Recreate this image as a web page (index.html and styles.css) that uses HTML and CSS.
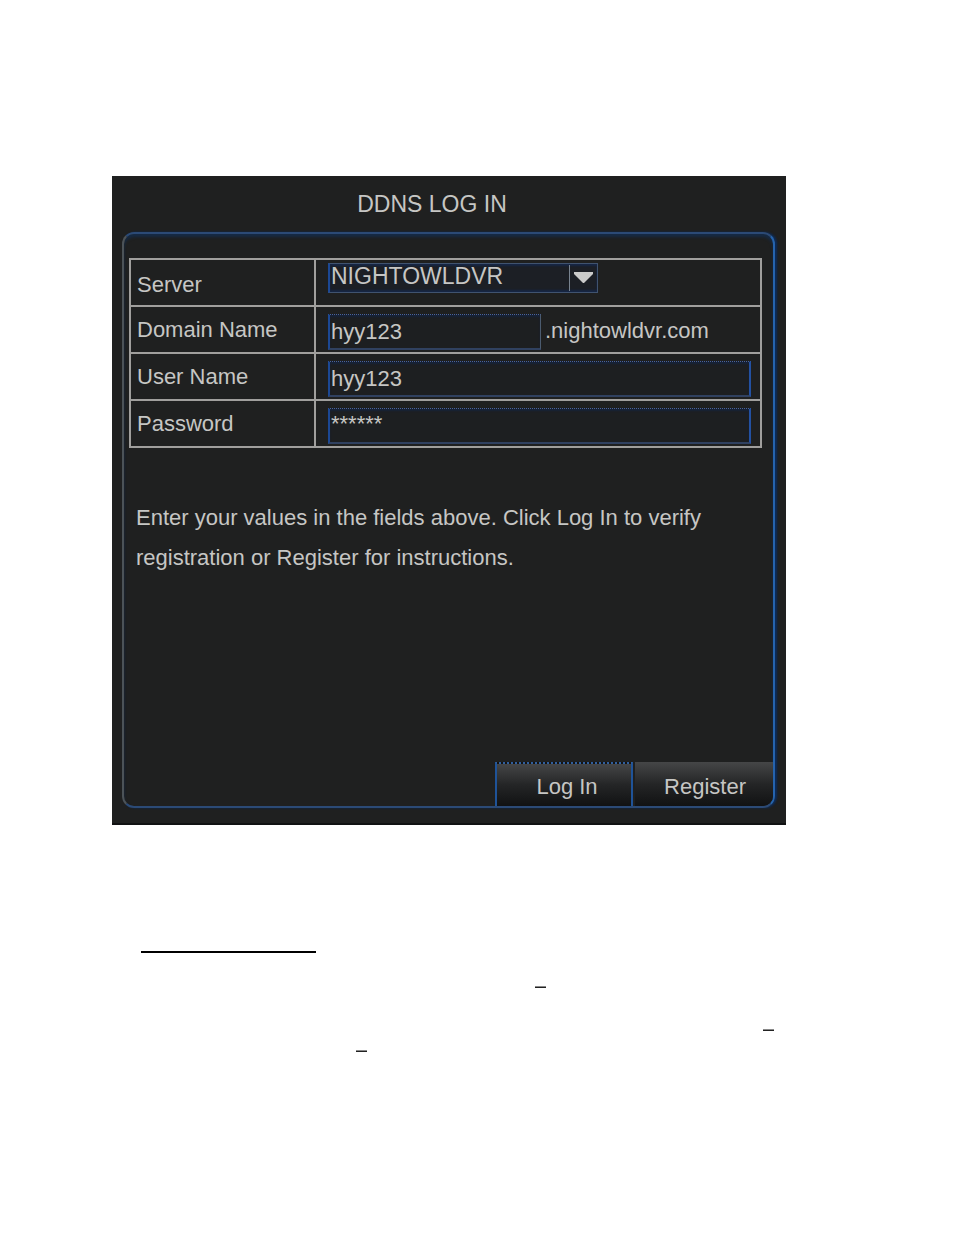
FILE: index.html
```html
<!DOCTYPE html>
<html lang="en">
<head>
<meta charset="utf-8">
<meta name="viewport" content="width=device-width, initial-scale=1">
<title>DDNS Log In</title>
<link rel="stylesheet" href="styles.css">
</head>
<body>
<main class="page">
  <form class="dialog">
    <h1 class="title">DDNS LOG IN</h1>
    <div class="frame">
      <table class="fields">
        <tr>
          <th scope="row" class="server-label"><label for="server">Server</label></th>
          <td class="server-cell">
            <div class="picker">
              <select id="server"><option>NIGHTOWLDVR</option></select>
              <svg class="arrow" viewBox="0 0 28 26" aria-hidden="true"><path class="arrow-line" d="M.5 0V26"/><path class="arrow-head" d="M5 7H24V9L15 18H14L5 9Z"/></svg>
            </div>
          </td>
        </tr>
        <tr>
          <th scope="row"><label for="domain">Domain Name</label></th>
          <td>
            <div class="domain">
              <input class="box box-short" id="domain" type="text" value="hyy123">
              <span class="suffix">.nightowldvr.com</span>
            </div>
          </td>
        </tr>
        <tr>
          <th scope="row"><label for="user">User Name</label></th>
          <td><input class="box" id="user" type="text" value="hyy123"></td>
        </tr>
        <tr>
          <th scope="row"><label for="password">Password</label></th>
          <td><input class="box box-stars" id="password" type="text" value="******"></td>
        </tr>
      </table>
      <p class="hint">Enter your values in the fields above. Click Log In to verify registration or Register for instructions.</p>
      <div class="actions">
        <button class="btn btn-active" type="button">Log In</button>
        <button class="btn" type="button">Register</button>
      </div>
    </div>
  </form>
  <section class="notes">
    <hr class="rule">
    <div class="note note-first"><span class="dash"></span></div>
    <div class="note note-second"><span class="dash"></span></div>
    <div class="note note-third"><span class="dash"></span></div>
  </section>
</main>
</body>
</html>
```
FILE: styles.css
```css
* { box-sizing: border-box; }

body {
  margin: 0;
  background: #fff;
  font-family: "Liberation Sans", Arial, sans-serif;
  font-size: 22px;
}

.page { padding: 176px 168px 0 112px; }

.dialog {
  padding: 0 11px 15px 10px;
  background: #1f2020;
  border-bottom: 2px solid #111213;
  color: #c6c6c4;
}

.title {
  margin: 0;
  padding-right: 33px;
  font-size: 23px;
  font-weight: 400;
  line-height: 56px;
  text-align: center;
}

.frame {
  padding: 24px 0 0 5px;
  border: 2px solid #2b4a76;
  border-left-color: #4c5358;
  border-right-color: #2563ad;
  border-radius: 12px;
  box-shadow: inset 0 3px 3px #152a45, 2px 0 2px #0b2c5c;
}

.fields {
  width: calc(100% - 11px);
  border-collapse: collapse;
  table-layout: fixed;
}

.fields th, .fields td { height: 47px; border: 2px solid #a09f9d; }

.fields th {
  width: 185px;
  padding: 0 6px;
  font-weight: 400;
  line-height: 25px;
  text-align: left;
}

.fields .server-label { padding-top: 3px; }

.fields td { padding: 7px 9px 2px 12px; }

.fields .server-cell { padding: 2px 9px 12px 12px; }

.picker { position: relative; width: 270px; }

.picker select {
  display: block;
  width: 100%;
  height: 30px;
  padding: 0 28px 4px 1px;
  appearance: none;
  border: 1px solid #40536f;
  border-left: 2px solid #1c4894;
  border-radius: 0;
  background: #1c1f25;
  box-shadow: inset 0 2px 2px #172645, inset 0 -2px 2px #172645;
  color: inherit;
  font: inherit;
  font-size: 23px;
  line-height: 24px;
}

.arrow { position: absolute; top: 2px; right: 1px; width: 28px; height: 26px; pointer-events: none; }
.arrow-line { fill: none; stroke: #788390; }
.arrow-head { fill: #cbcbca; }

.domain { display: flex; align-items: center; gap: 4px; line-height: 25px; }
.suffix { padding-bottom: 3px; }

.box {
  display: block;
  width: 100%;
  height: 36px;
  padding: 0 1px;
  border: 1px dotted #4662a0;
  border-right: 2px solid #2351a2;
  border-left: 2px solid #1c4894;
  border-bottom: 2px solid #304160;
  border-radius: 0;
  background: #1d1f21;
  box-shadow: inset 0 2px 2px #172238;
  color: inherit;
  font: inherit;
}

.box-short { width: 213px; border-right: 1px solid #4b5b6f; }
.box-stars { padding-bottom: 4px; }

.hint {
  margin: 0;
  padding: 50px 48px 0 7px;
  line-height: 40px;
}

.actions { display: flex; justify-content: flex-end; gap: 2px; margin-top: 184px; }

.btn {
  width: 138px;
  height: 44px;
  padding: 5px 0 0 2px;
  border: 0;
  background: linear-gradient(#454647, #242526 50%, #111213);
  color: inherit;
  font: inherit;
}

.btn:last-child { border-bottom-right-radius: 10px; }

.btn-active {
  padding: 3px 0 0 6px;
  border: 2px solid #1f5398;
  border-top: 2px dotted #315f9d;
  border-bottom: 0;
}

.notes { padding: 126px 0 0 29px; }
.rule { width: 175px; height: 2px; margin: 0; border: 0; background: #000; }
.note { display: flex; }
.note-first { padding: 33px 0 0 394px; }
.note-second { justify-content: flex-end; padding: 41px 12px 0 0; }
.note-third { padding: 19px 0 0 215px; }
.dash { width: 11px; height: 2px; border-top: 1px solid #888; border-bottom: 1px solid #222; }
```
